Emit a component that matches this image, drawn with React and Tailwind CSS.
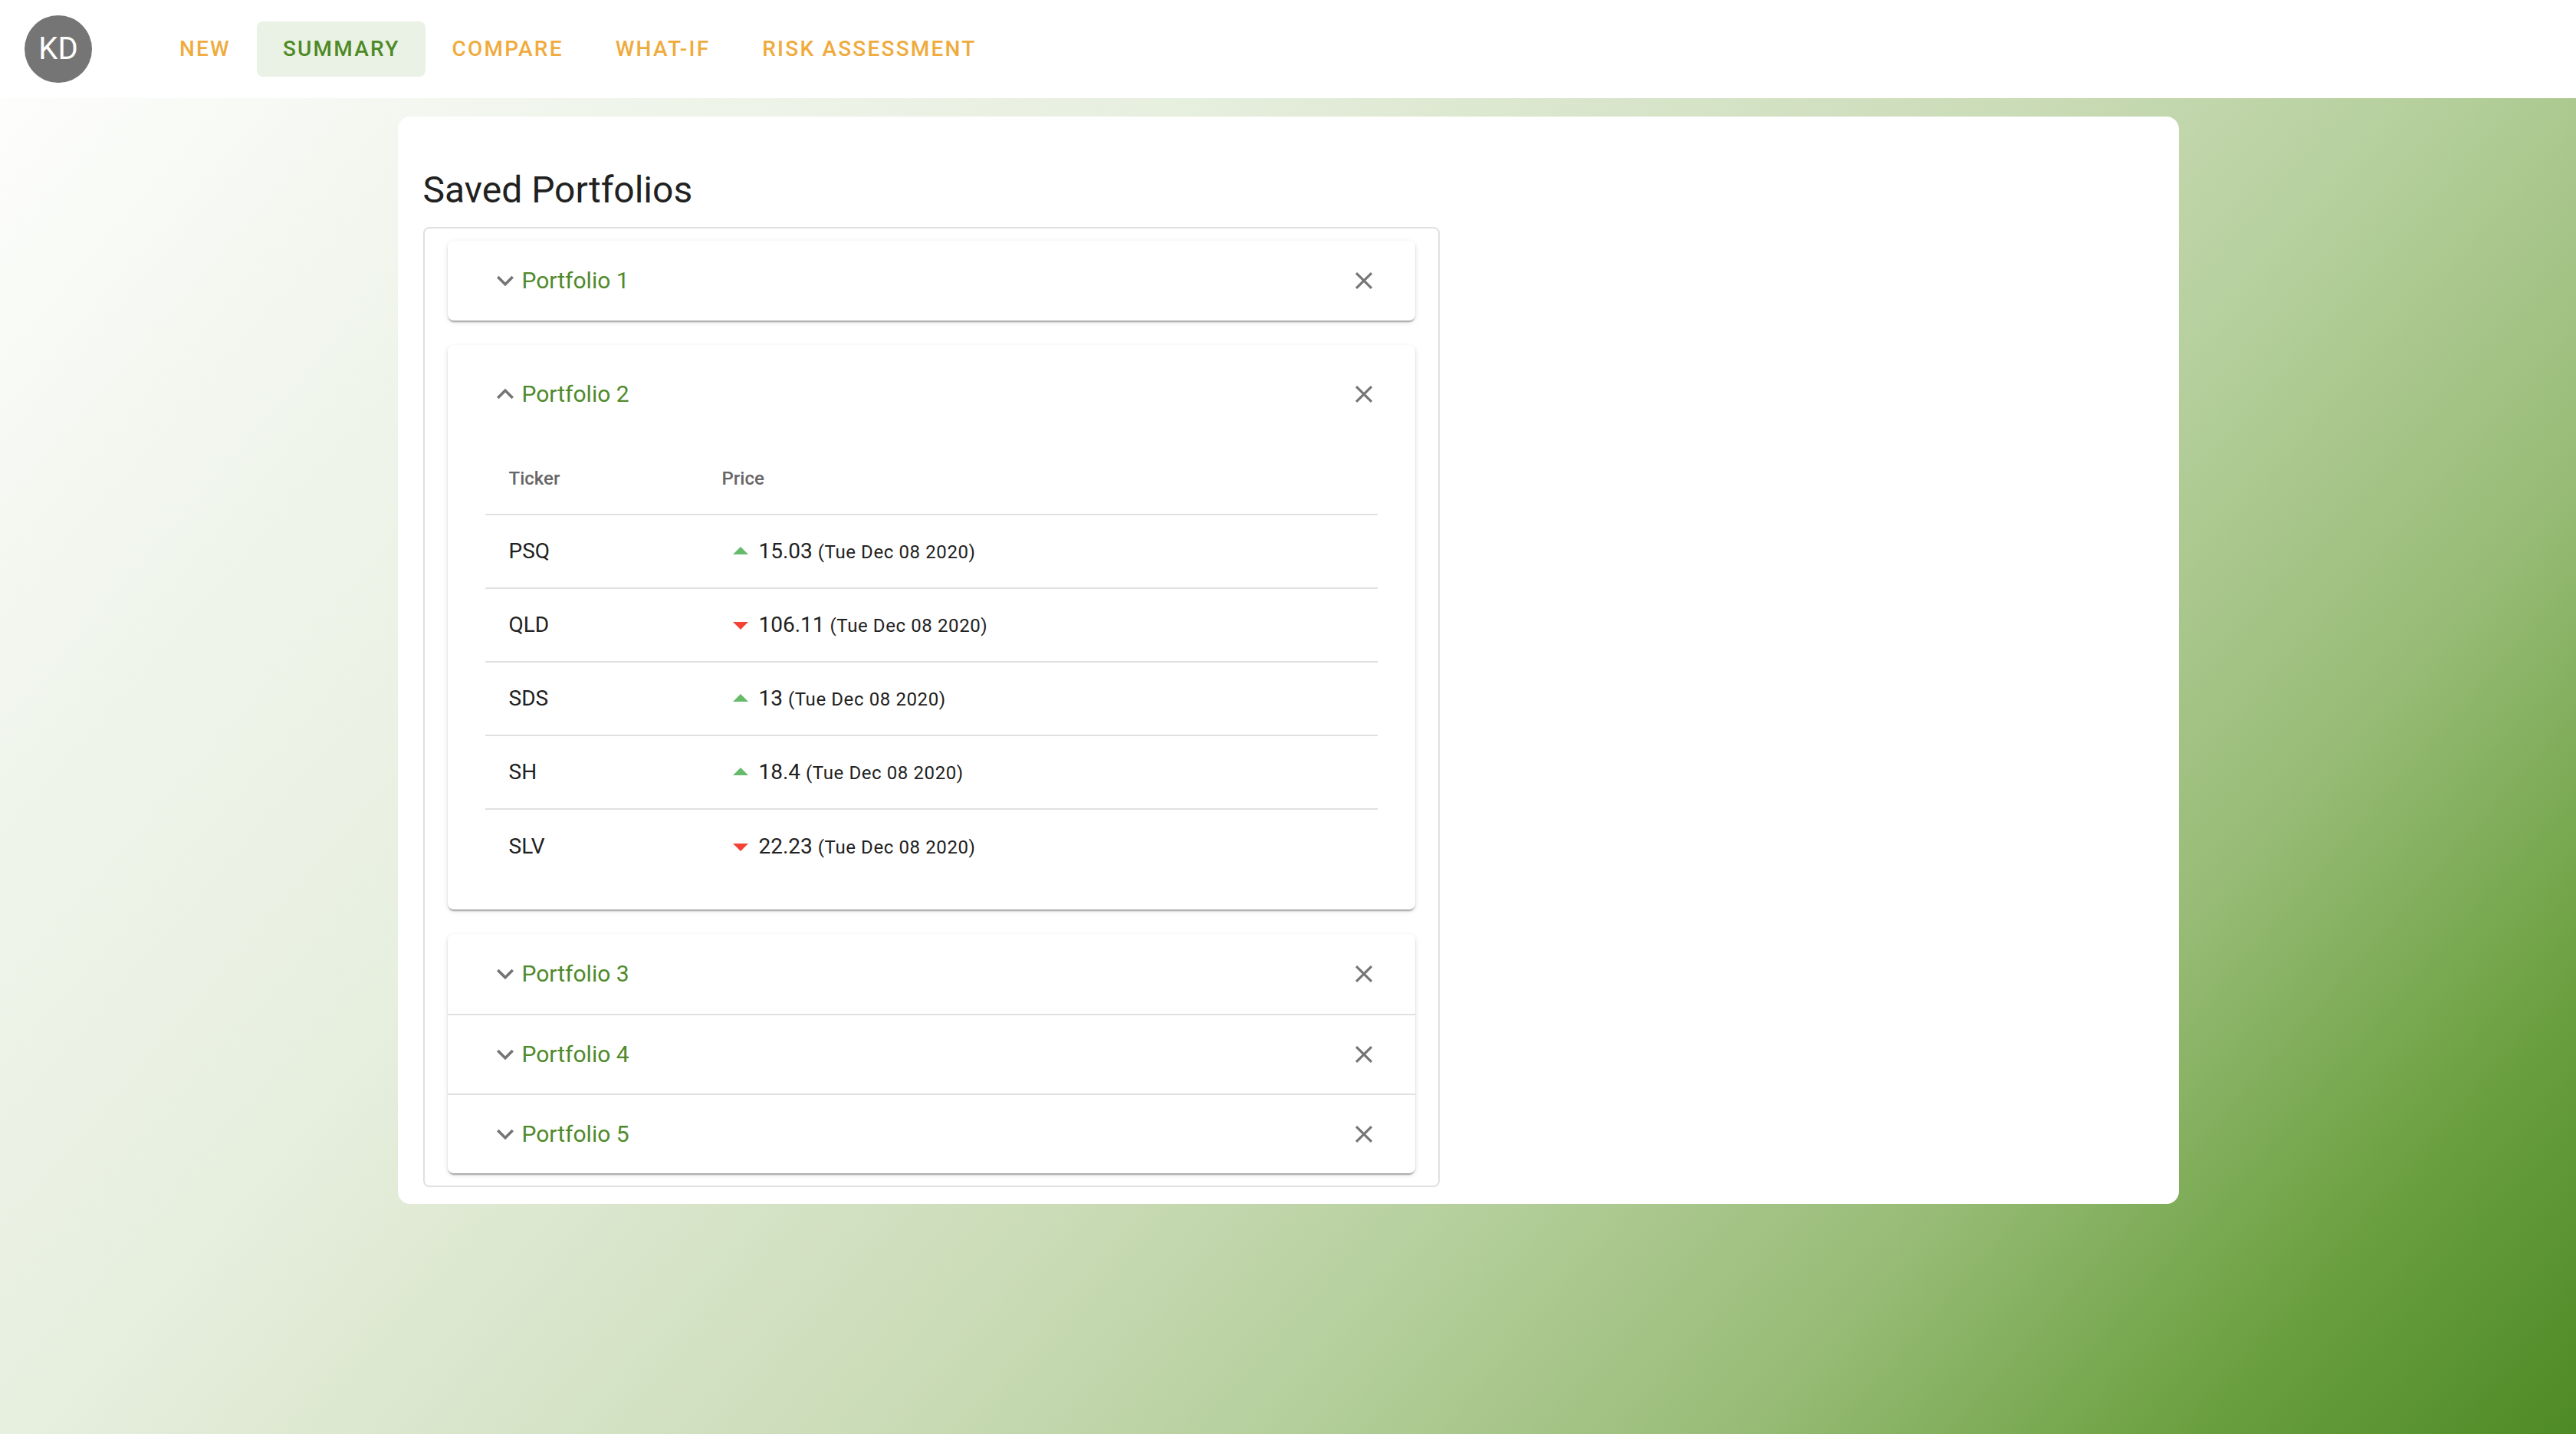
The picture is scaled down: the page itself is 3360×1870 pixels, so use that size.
import { useState } from 'react';

const tabs = ['NEW', 'SUMMARY', 'COMPARE', 'WHAT-IF', 'RISK ASSESSMENT'];

const holdings = [
    { ticker: 'PSQ', price: '15.03', up: true },
    { ticker: 'QLD', price: '106.11', up: false },
    { ticker: 'SDS', price: '13', up: true },
    { ticker: 'SH', price: '18.4', up: true },
    { ticker: 'SLV', price: '22.23', up: false },
];

const sombra = 'shadow-[0_4px_2px_-2px_rgba(0,0,0,0.2),0_2px_2px_0_rgba(0,0,0,0.14),0_2px_6px_0_rgba(0,0,0,0.12)]';

function Chevron({ abierto }) {
    return (
        <svg viewBox="0 0 24 24" className="w-[44px] h-[44px] shrink-0" fill="#757575">
            {abierto
                ? <path d="m12 8-6 6 1.41 1.41L12 10.83l4.59 4.58L18 14z" />
                : <path d="M16.59 8.59 12 13.17 7.41 8.59 6 10l6 6 6-6z" />}
        </svg>
    );
}

function Cerrar() {
    return (
        <svg viewBox="0 0 24 24" className="w-[38px] h-[38px] shrink-0" fill="#757575">
            <path d="M19 6.41 17.59 5 12 10.59 6.41 5 5 6.41 10.59 12 5 17.59 6.41 19 12 13.41 17.59 19 19 17.59 13.41 12z" />
        </svg>
    );
}

function Resumen({ nombre, abierto, onToggle, bajo = false }) {
    const alto = abierto ? 'h-[128px]' : bajo ? 'h-[102px]' : 'h-[104px]';
    return (
        <div
            onClick={onToggle}
            className={`flex items-center pl-[53px] pr-[48px] cursor-pointer ${alto}`}
        >
            <Chevron abierto={abierto} />
            <span className="text-[30px] text-[#4f8a2b] flex-1 leading-none">{nombre}</span>
            <Cerrar />
        </div>
    );
}

function TablaPrecios() {
    return (
        <div className="px-[49px] pb-[34px]">
            <div className="grid grid-cols-[277px_1fr] h-[94px] items-center border-b-2 border-[#e0e0e0] text-[24px] font-medium text-[#666666]">
                <span className="pl-[31px]">Ticker</span>
                <span className="pl-[32px]">Price</span>
            </div>
            {holdings.map((h, i) => (
                <div
                    key={h.ticker}
                    className={`grid grid-cols-[277px_1fr] items-center ${i < holdings.length - 1 ? 'h-[96px] border-b-2 border-[#e0e0e0]' : 'h-[96px]'}`}
                >
                    <span className="pl-[31px] text-[28px] text-[#212121]">{h.ticker}</span>
                    <div className="pl-[32px] flex items-center">
                        <svg viewBox="0 0 24 24" className="w-[48px] h-[48px] shrink-0" fill={h.up ? '#66bb6a' : '#f44336'}>
                            {h.up ? <path d="m7 14 5-5 5 5z" /> : <path d="m7 10 5 5 5-5z" />}
                        </svg>
                        <span className="text-[28px] text-[#212121] leading-none">
                            {h.price}{' '}
                            <span className="text-[24px] tracking-[0.6px]">(Tue Dec 08 2020)</span>
                        </span>
                    </div>
                </div>
            ))}
        </div>
    );
}

function App() {
    const [pestanaActiva, setPestanaActiva] = useState('SUMMARY');
    const [abierto, setAbierto] = useState(2);

    const alternar = (n) => setAbierto(abierto === n ? null : n);

    return (
        <div className="min-h-screen font-['Roboto','Liberation_Sans',sans-serif] bg-[linear-gradient(131deg,#ffffff_0%,#f2f6ee_15%,#e7efdf_33%,#cbdcb8_55%,#b5cf9c_66%,#98bc77_78%,#6a9f3f_90%,#4e8a26_100%)]">

            {/* BARRA SUPERIOR */}
            <header className="h-[128px] bg-white flex items-center pl-[32px]">
                <div className="w-[88px] h-[88px] rounded-full bg-[#757575] flex items-center justify-center text-white text-[40px] leading-none">
                    KD
                </div>
                <nav className="flex items-center ml-[80px]">
                    {tabs.map((t) => (
                        <button
                            key={t}
                            onClick={() => setPestanaActiva(t)}
                            className={`h-[72px] px-[34px] rounded-[8px] text-[28px] font-medium tracking-[2.2px] leading-none ${pestanaActiva === t ? 'bg-[#eaf1e5] text-[#4e8a26]' : 'text-[#f0ab3e]'}`}
                        >
                            {t}
                        </button>
                    ))}
                </nav>
            </header>

            {/* CONTENIDO */}
            <main className="flex justify-center pt-[24px]">
                <div className="w-[2323px] bg-white rounded-[16px] pt-[64px] pb-[22px] px-[33px]">
                    <h2 className="text-[48px] leading-[64px] text-[#212121] mb-[16px]">Saved Portfolios</h2>

                    <div className="w-[1326px] border-2 border-[#e0e0e0] rounded-[8px] px-[30px] py-[16px]">
                        {/* Portfolio 1 */}
                        <div className={`bg-white rounded-[8px] ${sombra}`}>
                            <Resumen nombre="Portfolio 1" abierto={abierto === 1} onToggle={() => alternar(1)} />
                            {abierto === 1 && <TablaPrecios />}
                        </div>

                        {/* Portfolio 2 (expandido) */}
                        <div className={`bg-white rounded-[8px] mt-[32px] ${sombra}`}>
                            <Resumen nombre="Portfolio 2" abierto={abierto === 2} onToggle={() => alternar(2)} />
                            {abierto === 2 && <TablaPrecios />}
                        </div>

                        {/* Portfolios 3-5 agrupados */}
                        <div className={`bg-white rounded-[8px] mt-[32px] ${sombra}`}>
                            {[3, 4, 5].map((n, i) => (
                                <div key={n} className={i > 0 ? 'border-t-2 border-[#e0e0e0]' : ''}>
                                    <Resumen nombre={`Portfolio ${n}`} abierto={abierto === n} bajo={i > 0} onToggle={() => alternar(n)} />
                                    {abierto === n && <TablaPrecios />}
                                </div>
                            ))}
                        </div>
                    </div>
                </div>
            </main>
        </div>
    );
}

export default App;
